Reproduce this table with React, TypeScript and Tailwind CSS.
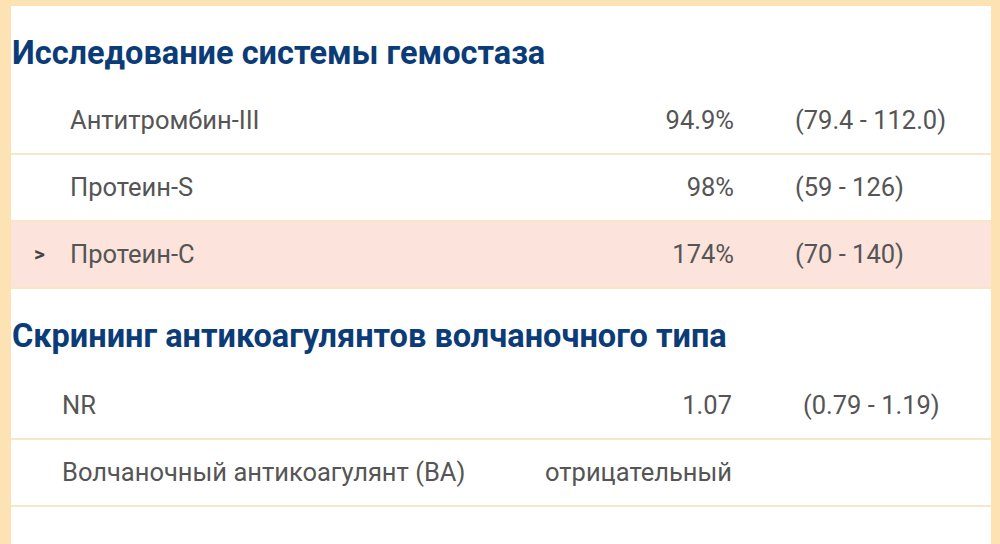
import React from 'react';

type Row = { name: string; value: string; range?: string; flag?: boolean };

const hemostasis: Row[] = [
  { name: 'Антитромбин-III', value: '94.9%', range: '(79.4 - 112.0)' },
  { name: 'Протеин-S', value: '98%', range: '(59 - 126)' },
  { name: 'Протеин-C', value: '174%', range: '(70 - 140)', flag: true },
];

const lupus: Row[] = [
  { name: 'NR', value: '1.07', range: '(0.79 - 1.19)' },
  { name: 'Волчаночный антикоагулянт (ВА)', value: 'отрицательный' },
];

function ResultRow({ row, narrow }: { row: Row; narrow?: boolean }) {
  return (
    <div
      className={`flex items-center h-[67px] border-b-2 border-[#f8e7c6] text-[25.5px] text-[#555555] ${
        row.flag ? 'bg-[#fce3db]' : 'bg-white'
      }`}
    >
      <div className={`${narrow ? 'w-[51px]' : 'w-[59px]'} shrink-0 pl-[23px] font-bold text-[#444] text-[21px]`}>
        {row.flag ? '>' : ''}
      </div>
      <div className="flex-1 whitespace-nowrap">{row.name}</div>
      <div className="text-right whitespace-nowrap">{row.value}</div>
      <div className={`${narrow ? 'w-[259px] pl-[71px]' : 'w-[257px] pl-[61px]'} shrink-0 whitespace-nowrap`}>
        {row.range ?? ''}
      </div>
    </div>
  );
}

export default function App() {
  return (
    <div
      className="w-[1000px] h-[544px] overflow-hidden bg-[#fde3b3] pt-[6px] pl-[11px] pr-[9px]"
      style={{ fontFamily: 'Roboto, "Noto Sans", sans-serif' }}
    >
      <div className="bg-white h-full">
        <h2 className="pl-[1px] pt-[29px] pb-[17px] text-[32.5px] leading-[36px] font-bold text-[#0b3c78] whitespace-nowrap">
          Исследование системы гемостаза
        </h2>
        <div>
          {hemostasis.map((r) => (
            <ResultRow key={r.name} row={r} />
          ))}
        </div>
        <h2 className="pl-[1px] pt-[29px] pb-[19px] text-[32.5px] leading-[36px] font-bold text-[#0b3c78] whitespace-nowrap">
          Скрининг антикоагулянтов волчаночного типа
        </h2>
        <div>
          {lupus.map((r) => (
            <ResultRow key={r.name} row={r} narrow />
          ))}
        </div>
      </div>
    </div>
  );
}
